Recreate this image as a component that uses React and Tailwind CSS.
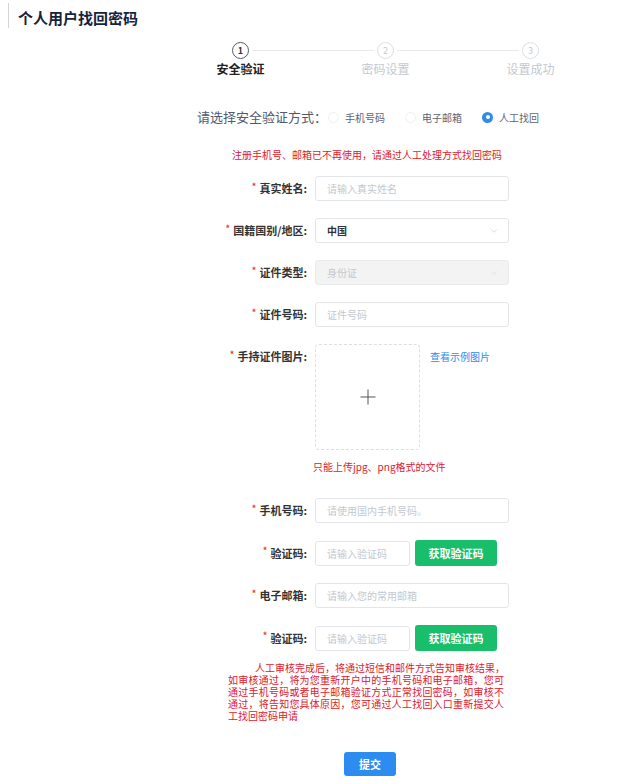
import { ChevronDown } from 'lucide-react';

const Label = ({ children, top }) => (
  <div
    className={`w-[107px] h-[25px] flex items-center justify-end text-[11px] font-bold text-[#333] ${
      top ? 'self-start' : ''
    }`}
  >
    <span className="text-[#ed4014] text-[9px] mr-[3px] -mt-[4px]">*</span>
    {children}:
  </div>
);

const TextInput = ({ placeholder, width = 'w-[194px]' }) => (
  <div
    className={`${width} h-[25px] ml-2 border border-[#e3e5e8] rounded-[3px] bg-white flex items-center pl-[11px] text-[10px] text-[#c5c8ce]`}
  >
    {placeholder}
  </div>
);

const Radio = ({ label, checked }) => (
  <div className="flex items-center gap-[6px] mr-[20px]">
    {checked ? (
      <span className="w-[11px] h-[11px] rounded-full bg-[#2d8cf0] flex items-center justify-center">
        <span className="w-[4px] h-[4px] rounded-full bg-white" />
      </span>
    ) : (
      <span className="w-[11px] h-[11px] rounded-full border border-[#f0f0f0] bg-white" />
    )}
    <span className="text-[10px] text-[#5c6478]">{label}</span>
  </div>
);

const steps = ['安全验证', '密码设置', '设置成功'];

// notice text, broken the way the reference breaks it
const notice = [
  '人工审核完成后，将通过短信和邮件方式告知审核结果，',
  '如审核通过，将为您重新开户中的手机号码和电子邮箱，您可',
  '通过手机号码或者电子邮箱验证方式正常找回密码，如审核不',
  '通过，将告知您具体原因，您可通过人工找回入口重新提交人',
  '工找回密码申请',
];

const App = () => {
  return (
    <div className="min-h-screen bg-white font-['Noto_Sans_CJK_SC',sans-serif] pb-3">
      {/* Header */}
      <div className="pt-[3px]">
        <div className="ml-2 h-[25px] border-l border-[#d4d4d4] pl-[9px] pt-[5px] flex items-center">
          <span className="text-[15px] leading-[18px] font-bold text-[#17233d]">个人用户找回密码</span>
        </div>
      </div>

      {/* Steps */}
      <div className="ml-[168px] w-[435px] mt-[14px]">
        <div className="grid grid-cols-3">
          {steps.map((s, i) => (
            <div key={s} className="flex items-center h-[17px]">
              <div className={`flex-1 h-px mr-[3px] ${i === 0 ? '' : 'bg-[#e8eaec]'}`} />
              <div
                className={`w-[17px] h-[17px] rounded-full flex items-center justify-center text-[9px] leading-none ${
                  i === 0
                    ? 'border-[1.5px] border-[#515a6e] text-[#333] font-bold'
                    : 'border border-[#dcdee2] text-[#c5c8ce]'
                }`}
              >
                {i + 1}
              </div>
              <div className={`flex-1 h-px ml-[3px] ${i === 2 ? '' : 'bg-[#e8eaec]'}`} />
            </div>
          ))}
        </div>
        <div className="grid grid-cols-3 mt-[2px]">
          {steps.map((s, i) => (
            <div
              key={s}
              className={`text-center text-[12px] leading-[16px] ${
                i === 0 ? 'text-[#222] font-bold' : 'text-[#c5c8ce]'
              }`}
            >
              {s}
            </div>
          ))}
        </div>
      </div>

      {/* Verify method */}
      <div className="ml-[197px] mt-[30px] h-[20px] flex items-center">
        <span className="text-[13px] text-[#515a6e]">请选择安全验证方式：</span>
        <div className="flex items-center ml-[1px]">
          <Radio label="手机号码" />
          <Radio label="电子邮箱" />
          <Radio label="人工找回" checked />
        </div>
      </div>

      <div className="ml-[232px] mt-[21px] text-[10px] leading-[14px] text-[#e0182d]">
        注册手机号、邮箱已不再使用，请通过人工处理方式找回密码
      </div>

      {/* Form */}
      <div className="ml-[200px] mt-[14px] flex flex-col gap-[17px]">
        <div className="flex items-center">
          <Label>真实姓名</Label>
          <TextInput placeholder="请输入真实姓名" />
        </div>

        <div className="flex items-center">
          <Label>国籍国别/地区</Label>
          <div className="w-[194px] h-[25px] ml-2 border border-[#e3e5e8] rounded-[3px] bg-white flex items-center justify-between pl-[11px] pr-[9px]">
            <span className="text-[10px] text-[#333] font-bold">中国</span>
            <ChevronDown className="w-[10px] h-[10px] text-[#c5c8ce]" strokeWidth={1.5} />
          </div>
        </div>

        <div className="flex items-center">
          <Label>证件类型</Label>
          <div className="w-[194px] h-[25px] ml-2 border border-[#e8eaec] rounded-[3px] bg-[#f3f3f3] flex items-center justify-between pl-[11px] pr-[9px]">
            <span className="text-[10px] text-[#c5c8ce]">身份证</span>
            <ChevronDown className="w-[10px] h-[10px] text-[#d4d6da]" strokeWidth={1.5} />
          </div>
        </div>

        <div className="flex items-center">
          <Label>证件号码</Label>
          <TextInput placeholder="证件号码" />
        </div>

        <div className="flex mb-[7px]">
          <Label top>手持证件图片</Label>
          <div className="ml-2">
            <div className="flex items-start">
              <div className="w-[105px] h-[106px] border border-dashed border-[#dcdee2] rounded-[4px] bg-white flex items-center justify-center">
                <svg width="16" height="16" viewBox="0 0 16 16">
                  <path d="M8 0.5V15.5M0.5 8H15.5" stroke="#555" strokeWidth="1" fill="none" />
                </svg>
              </div>
              <span className="ml-[10px] leading-[25px] text-[10px] text-[#2d8cf0]">查看示例图片</span>
            </div>
            <div className="mt-[10px] -ml-[2px] text-[10px] leading-[14px] text-[#e0182d]">
              只能上传jpg、png格式的文件
            </div>
          </div>
        </div>

        <div className="flex items-center">
          <Label>手机号码</Label>
          <TextInput placeholder="请使用国内手机号码。" />
        </div>

        <div className="flex items-center">
          <Label>验证码</Label>
          <TextInput placeholder="请输入验证码" width="w-[95px]" />
          <button className="ml-[5px] w-[82px] h-[26px] rounded-[3px] bg-[#19be6b] text-white text-[11px] font-bold">
            获取验证码
          </button>
        </div>

        <div className="flex items-center">
          <Label>电子邮箱</Label>
          <TextInput placeholder="请输入您的常用邮箱" />
        </div>

        <div className="flex items-center">
          <Label>验证码</Label>
          <TextInput placeholder="请输入验证码" width="w-[95px]" />
          <button className="ml-[5px] w-[82px] h-[26px] rounded-[3px] bg-[#19be6b] text-white text-[11px] font-bold">
            获取验证码
          </button>
        </div>
      </div>

      {/* Notice */}
      <div className="ml-[228px] mt-[12px] w-[276px] font-['Liberation_Sans','Noto_Sans_CJK_SC',sans-serif] text-[10px] leading-[12px] text-[#e0182d]">
        {notice.map((line, i) => (
          <div
            key={i}
            className={`whitespace-nowrap ${i === 0 ? 'pl-[27px]' : ''} ${
              i < notice.length - 1 ? 'text-justify [text-align-last:justify]' : ''
            }`}
          >
            {line}
          </div>
        ))}
      </div>

      <button className="ml-[344px] mt-[29px] w-[52px] h-[24px] rounded-[3px] bg-[#2d8cf0] text-white text-[11px] font-bold">
        提交
      </button>
    </div>
  );
};

export default App;
